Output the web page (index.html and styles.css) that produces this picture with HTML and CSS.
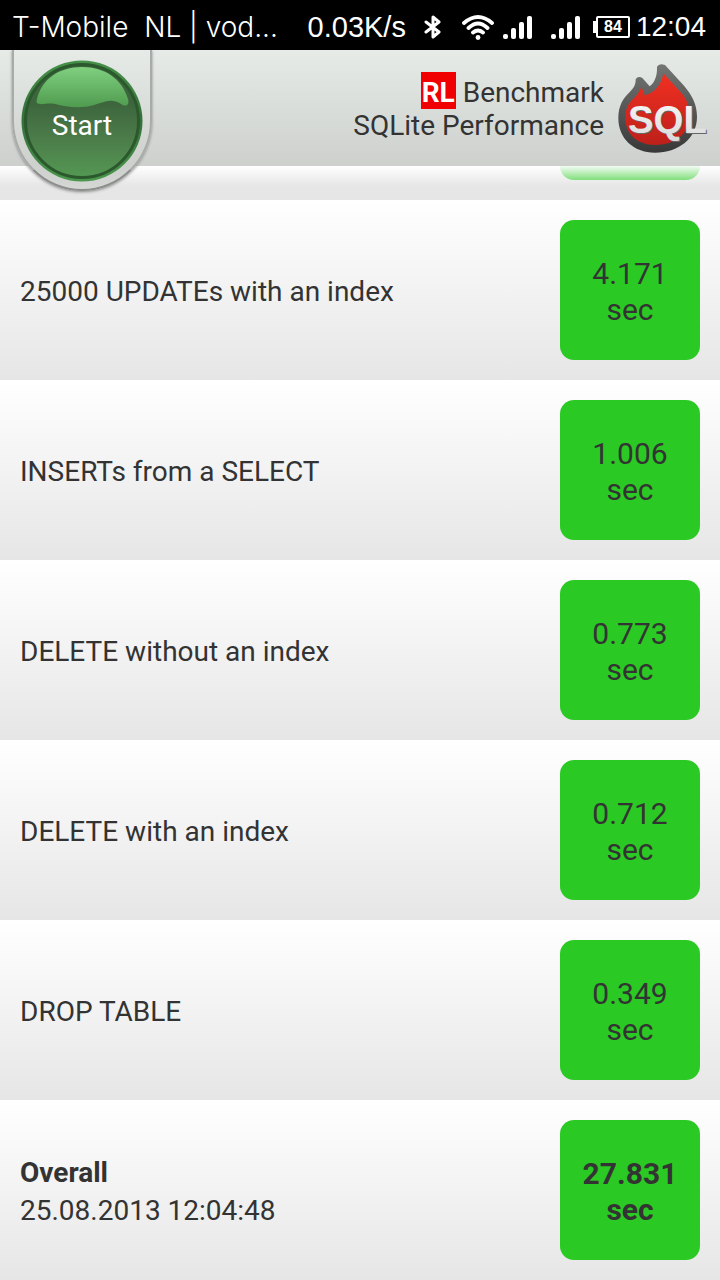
FILE: index.html
```
<!DOCTYPE html>
<html lang="en">
<head>
<meta charset="utf-8">
<meta name="viewport" content="width=device-width, initial-scale=1">
<title>RL Benchmark SQLite Performance</title>
<link rel="stylesheet" href="styles.css">
</head>
<body>
<div class="status">
  <span class="carrier">T-Mobile  NL | vod...</span>
  <span class="speed">0.03K/s</span>
  <svg class="bluetooth" width="18" height="24" viewBox="0 0 18 24" fill="none" stroke="#fff" stroke-width="3" stroke-linejoin="round" stroke-linecap="round"><path d="M2 7 15 17 9 22V2l6 5L2 17"/></svg>
  <svg class="wifi" width="32" height="26" viewBox="0 0 32 26" fill="none" stroke="#fff" stroke-width="3.8" stroke-linecap="round"><path d="M2 9Q16-3 30 9M6.500 14Q16 5 25.500 14M11 18.500q5-4 10 0"/><circle cx="16" cy="23.500" r="2.400" fill="#fff" stroke="none"/></svg>
  <svg class="signal" width="30" height="24" viewBox="0 0 30 24" fill="#fff"><rect x="0" y="19" width="5" height="5" rx="2"/><rect x="8" y="13" width="5" height="11" rx="2"/><rect x="16" y="7" width="5" height="17" rx="2"/><rect x="24" y="1" width="5" height="23" rx="2"/></svg>
  <svg class="signal second" width="30" height="24" viewBox="0 0 30 24" fill="#fff"><rect x="0" y="19" width="5" height="5" rx="2"/><rect x="8" y="13" width="5" height="11" rx="2"/><rect x="16" y="7" width="5" height="17" rx="2"/><rect x="24" y="1" width="5" height="23" rx="2"/></svg>
  <span class="battery"><span class="level">84</span></span>
  <time class="clock">12:04</time>
</div>
<header class="header">
  <div class="tab">
    <button class="start" type="button">
      <svg class="orb" viewBox="0 0 124 124" aria-hidden="true">
        <defs>
          <linearGradient id="rim" x1="0" y1="0" x2="0" y2="1"><stop offset="0" stop-color="#469249"/><stop offset=".5" stop-color="#367039"/><stop offset="1" stop-color="#4a974d"/></linearGradient>
          <linearGradient id="ball" x1="0" y1="0" x2="0" y2="1"><stop offset=".35" stop-color="#3d663d"/><stop offset=".6" stop-color="#4a7848"/><stop offset="1" stop-color="#549853"/></linearGradient>
          <linearGradient id="gloss" x1="0" y1="0" x2="0" y2="1"><stop offset="0" stop-color="#80d080"/><stop offset="1" stop-color="#4f9b4f"/></linearGradient>
        </defs>
        <circle cx="62" cy="62" r="60.500" fill="url(#rim)"/>
        <circle cx="62" cy="62" r="56.500" fill="url(#ball)" stroke="#2c582d" stroke-width="3"/>
        <path d="M17 40C22 20 39 8 62 8s40 12 46 32c2 7-3 8-7 5-10-7-19-1-27 1-13 4-28 2-39-1-8-2-21 4-18-5Z" fill="url(#gloss)"/>
      </svg>
      <span class="start-label">Start</span>
    </button>
  </div>
  <h1 class="title"><span class="brand">RL</span> Benchmark<br>SQLite Performance</h1>
  <svg class="logo" width="90" height="92" viewBox="54 36 270 276" role="img" aria-label="SQL">
    <defs>
      <linearGradient id="edge" x1="0" y1="0" x2="0" y2="1"><stop offset="0" stop-color="#747674"/><stop offset="1" stop-color="#383838"/></linearGradient>
      <linearGradient id="fire" x1="0" y1="0" x2="0" y2="1"><stop offset="0" stop-color="#f13022"/><stop offset="1" stop-color="#bd201a"/></linearGradient>
      <linearGradient id="metal" x1="0" y1="0" x2="0" y2="1"><stop offset="0" stop-color="#f8f8f8"/><stop offset="1" stop-color="#dadada"/></linearGradient>
    </defs>
    <path fill="url(#edge)" d="M107 88Q114 77 127 84L149 109C167 95 172 72 171 50Q177 38 195 45L252 107C277 136 291 165 291 200C291 265 235 308 165 308C100 308 55 265 55 205C55 165 70 145 90 125C104 111 107 103 107 88Z"/>
    <path fill="url(#fire)" d="M124 110L134 136C162 130 185 105 190 70L245 130C262 150 270 175 270 195C270 250 225 285 165 285C110 285 76 250 76 205C76 175 85 160 100 146C115 132 120 120 124 110Z"/>
    <text class="logo-text logo-shade" x="87" y="253">SQL</text>
    <text class="logo-text" x="84" y="249" fill="url(#metal)">SQL</text>
  </svg>
</header>
<main class="results">
  <section class="row row-cut"><div class="badge badge-cut"></div></section>
  <section class="row"><p class="name">25000 UPDATEs with an index</p><div class="badge">4.171<br>sec</div></section>
  <section class="row"><p class="name">INSERTs from a SELECT</p><div class="badge">1.006<br>sec</div></section>
  <section class="row"><p class="name">DELETE without an index</p><div class="badge">0.773<br>sec</div></section>
  <section class="row"><p class="name">DELETE with an index</p><div class="badge">0.712<br>sec</div></section>
  <section class="row"><p class="name">DROP TABLE</p><div class="badge">0.349<br>sec</div></section>
  <section class="row"><p class="name overall"><strong>Overall</strong><br>25.08.2013 12:04:48</p><div class="badge total">27.831<br>sec</div></section>
</main>
</body>
</html>
```
FILE: styles.css
```
* { box-sizing: border-box; }
body {
  margin: 0;
  background: #fff;
  color: #333;
  font: 28px/36px Roboto, sans-serif;
}
.status {
  display: flex;
  align-items: center;
  height: 50px;
  padding: 3px 14px 0 12px;
  background: #000;
  color: #fff;
  font: 28px/32px "Liberation Sans", Arial, sans-serif;
  white-space: pre;
}
.carrier {
  flex: 1;
  font-family: Inter, sans-serif;
  font-weight: 300;
}
.speed { margin-right: 18px; font-size: 29px; }
.bluetooth { margin-right: 20px; }
.wifi { margin-right: 9px; }
.signal { margin-right: 12px; }
.signal:not(.second) { margin-right: 18px; }
.battery {
  display: flex;
  align-items: center;
  margin-right: 6px;
}
.battery::before {
  content: "";
  width: 3px;
  height: 12px;
  background: #fff;
}
.level {
  width: 34px;
  height: 22px;
  border: 2px solid #fff;
  border-radius: 2px;
  font: bold 16px/18px "Liberation Sans", Arial, sans-serif;
  text-align: center;
}
.header {
  position: relative;
  z-index: 1;
  display: flex;
  align-items: flex-start;
  height: 116px;
  padding: 0 12px;
  background: linear-gradient(#e6ebe7, #cdd0cd);
}
.tab {
  display: flex;
  justify-content: center;
  width: 140px;
  height: 141px;
  padding-top: 9px;
  border: 2px solid #a8aba8;
  border-top: 0;
  border-bottom-color: #8c8e8c;
  border-radius: 0 0 70px 70px;
  background: linear-gradient(#e6ebe7, #cdd0cd 116px, #d5d7d5);
  box-shadow: 0 1px 3px #888;
  clip-path: inset(0 -4px -6px -4px);
}
.start {
  display: grid;
  place-items: center;
  width: 124px;
  height: 124px;
  padding: 0;
  border: 0;
  border-radius: 50%;
  background: none;
  color: #fff;
  font: 28px/36px Roboto, sans-serif;
  cursor: pointer;
}
.orb, .start-label { grid-area: 1 / 1; }
.orb { width: 124px; height: 124px; }
.start-label { padding-top: 10px; z-index: 1; }
.title {
  flex: 1;
  margin: 26px 14px 0 0;
  font-size: 28px;
  line-height: 33px;
  font-weight: 400;
  text-align: right;
}
.brand {
  display: inline-block;
  height: 37px;
  margin: -4px 0;
  padding: 4px 1px 0;
  background: #f00000;
  color: #fff;
  font-weight: 700;
}
.logo { margin-top: 12px; overflow: visible; }
.logo-text { font: bold 115px "Liberation Sans", Arial, sans-serif; }
.logo-shade { fill: #666; }
.row {
  display: flex;
  align-items: center;
  justify-content: space-between;
  min-height: 180px;
  padding: 20px;
  background: linear-gradient(#fff, #e6e6e6);
}
.row-cut {
  justify-content: flex-end;
  min-height: 34px;
  padding-top: 0;
  background: linear-gradient(#fff, #e6e6e6 20px);
}
.name { margin: 0; padding-top: 4px; }
.overall { line-height: 38px; }
.badge {
  display: grid;
  align-content: center;
  width: 140px;
  height: 140px;
  padding-top: 3px;
  border-radius: 14px;
  background: #2bc923;
  font-size: 30px;
  text-align: center;
}
.badge-cut {
  height: 14px;
  border-radius: 0 0 14px 14px;
  background: linear-gradient(#f4fcf4, #80df7b);
}
.total { font-weight: 700; }
```
